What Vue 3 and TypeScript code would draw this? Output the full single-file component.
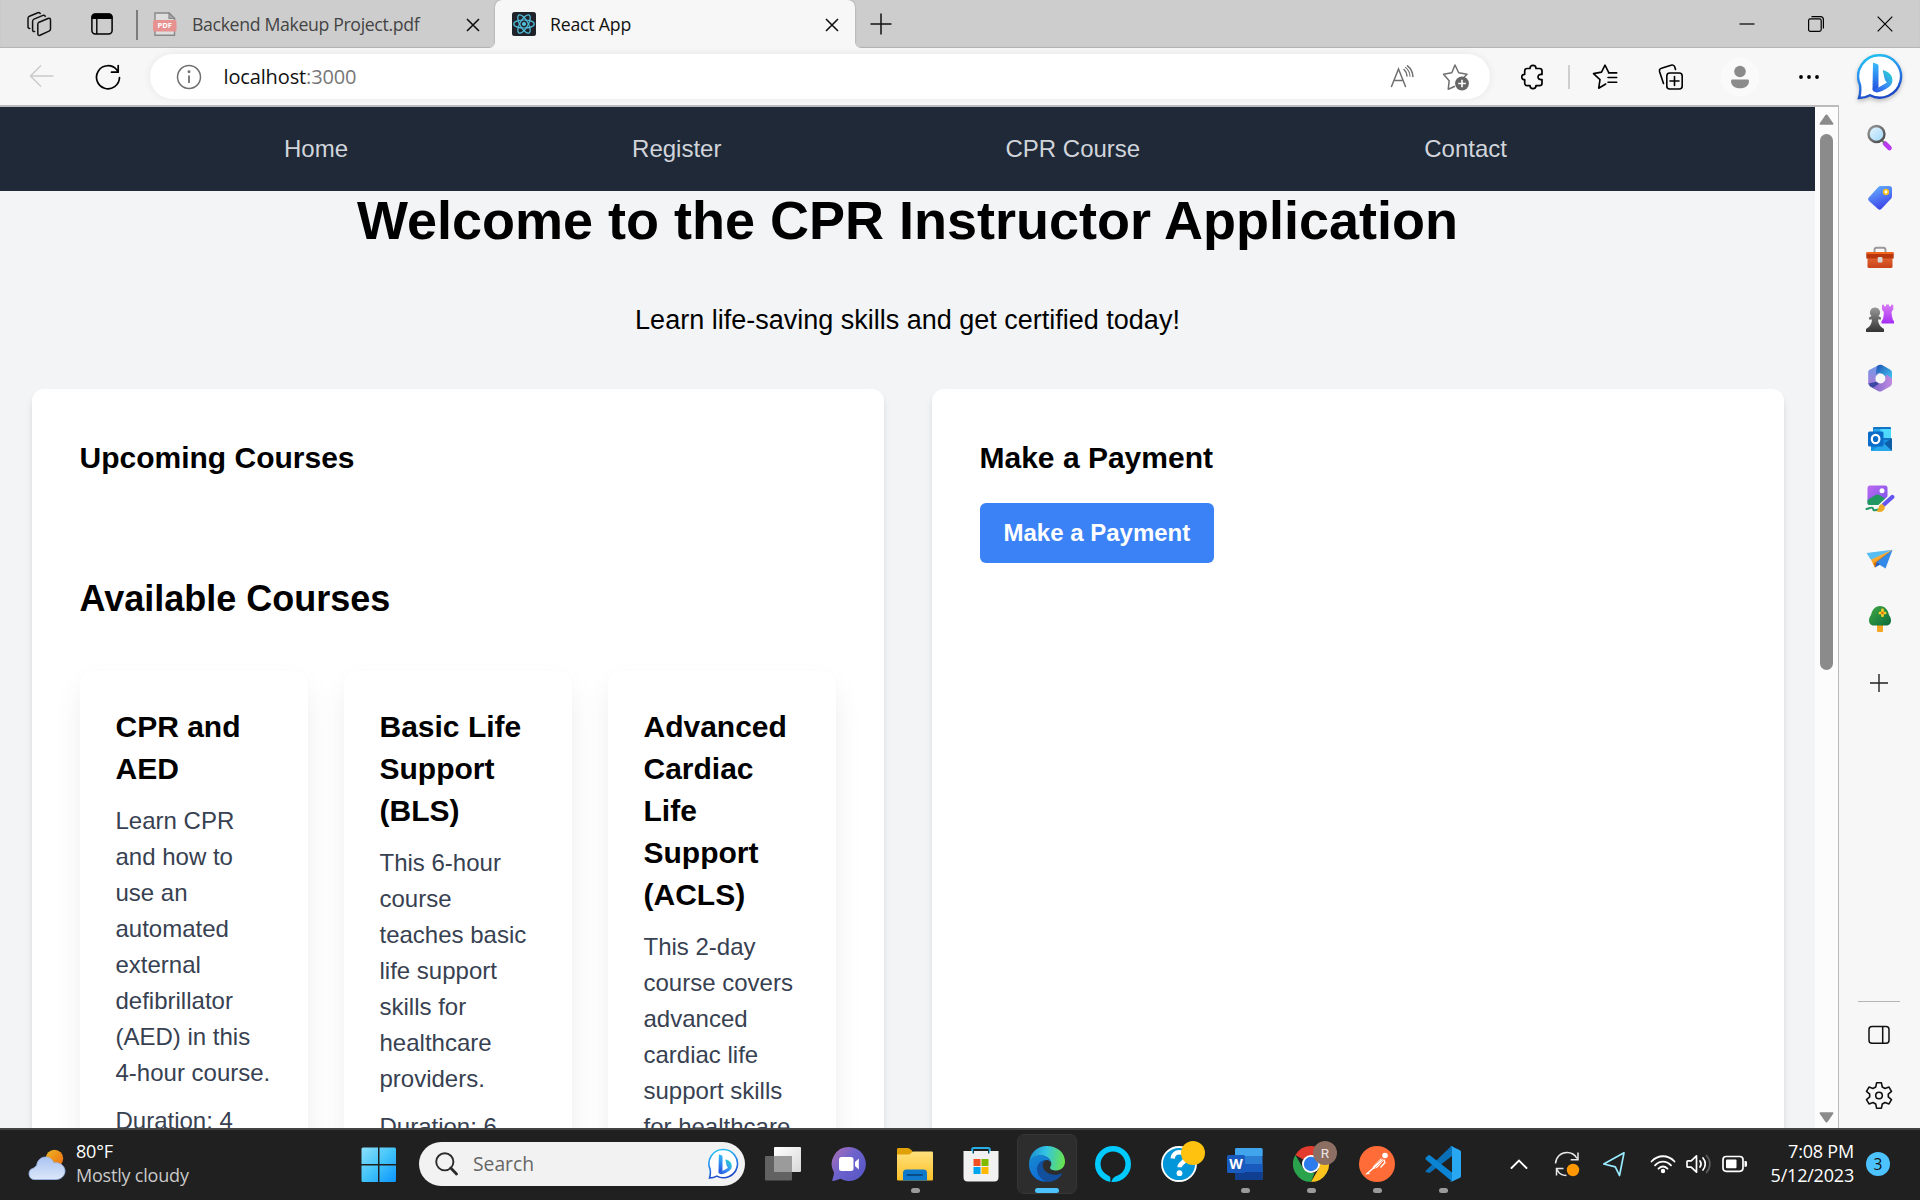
<script setup lang="ts">
interface Course {
  title: string
  description: string
  hours?: number
}

const links: string[] = ['Home', 'Register', 'CPR Course', 'Contact']

const courses: Course[] = [
  {
    title: 'CPR and AED',
    description: 'Learn CPR and how to use an automated external defibrillator (AED) in this 4-hour course.',
    hours: 4,
  },
  {
    title: 'Basic Life Support (BLS)',
    description: 'This 6-hour course teaches basic life support skills for healthcare providers.',
    hours: 6,
  },
  {
    title: 'Advanced Cardiac Life Support (ACLS)',
    description: 'This 2-day course covers advanced cardiac life support skills for healthcare',
  },
]
</script>

<template>
  <div class="screen">
    <svg class="defs" width="0" height="0">
      <defs>
        <linearGradient id="bingRing" x1="0" y1="0" x2="0.3" y2="1">
          <stop offset="0" stop-color="#1fc8f0" /><stop offset="0.5" stop-color="#2a8ff0" /><stop offset="1" stop-color="#1b48c8" />
        </linearGradient>
        <linearGradient id="bingStem" x1="0" y1="0" x2="0" y2="1">
          <stop offset="0" stop-color="#37bdff" /><stop offset="1" stop-color="#2450e0" />
        </linearGradient>
        <linearGradient id="bingBowl" x1="0" y1="1" x2="1" y2="0">
          <stop offset="0" stop-color="#2450e0" /><stop offset="0.5" stop-color="#3a90f5" /><stop offset="1" stop-color="#23dcc8" />
        </linearGradient>
        <symbol id="bing" viewBox="0 0 46 48">
          <path d="M23 2.200a21.200 21.200 0 1 1-10 40c-3.500 1.900-7 2.800-11 2.800 1.700-4.500 1.600-8 1-13A21.200 21.200 0 0 1 23 2.200z" fill="#fff" stroke="url(#bingRing)" stroke-width="2.400" />
          <path d="M16 9.500l4 1.500c1.200.5 1.500 1 1.500 2.300v21.500L18 37.500c-1.500.8-2.500-.2-2.500-1.700z" fill="url(#bingStem)" />
          <path d="M26 18.500c-.4-1 .3-1.500 1.200-1.100 5 1.900 8.200 4.600 8.200 9.600 0 5.500-3.400 7.500-11 11.300-4.500 2.200-8.900 1-8.900-2.500 2 .8 3.900.1 6-1.300l8.500-5c-1.500-1-2-2.200-2.600-4.400z" fill="url(#bingBowl)" />
        </symbol>
      </defs>
    </svg>

    <header class="tabstrip">
      <svg class="ic workspaces" width="26" height="26" viewBox="0 0 26 26" fill="none" stroke="#111" stroke-width="1.500" stroke-linejoin="round" stroke-linecap="round">
        <path d="M12.500 11.500l9.500-4c1.500-.6 2.500 0 2.500 1.500v9c0 1-.6 1.700-1.500 2.100l-9 4.100c-1.300.5-2.200-.1-2.200-1.400v-9.300c0-1 .1-1.600.7-2z" />
        <path d="M8.600 20.500c-1.200.3-2-.3-2-1.500v-8.500c0-1.300.4-2 1.400-2.400l9-3.700c1.200-.4 1.900 0 2.200 1" />
        <path d="M3.800 17.500c-1.200 0-1.800-.6-1.800-1.700V7.500c0-1.200.4-1.900 1.400-2.300l8.500-3.500c1.200-.4 2-.1 2.300.8" />
      </svg>
      <svg class="ic tabmenu" width="22" height="22" viewBox="0 0 22 22">
        <rect x="0.900" y="0.900" width="20.200" height="20.200" rx="3.500" fill="none" stroke="#000" stroke-width="1.500" />
        <path d="M.5 6V4A3.500 3.500 0 0 1 4 .5h14A3.500 3.500 0 0 1 21.500 4v2z" fill="#000" />
        <path d="M5.800 6v15" stroke="#000" stroke-width="1.400" />
      </svg>
      <i class="tab-divider"></i>
      <div class="tab tab-pdf">
        <svg width="24" height="24" viewBox="0 0 24 24">
          <path d="M2 1h14l5.500 5.500V23.300H2z" fill="#dedede" stroke="#888" stroke-width="1.400" />
          <path d="M16 1v5.500h5.500z" fill="#aaa" stroke="#888" stroke-width="1.200" />
          <rect x="0" y="8" width="23.500" height="11.500" rx="1.500" fill="#e79291" />
          <text x="11.800" y="16.400" text-anchor="middle" font-size="7.500" font-weight="700" fill="#fff" font-family="Open Sans, sans-serif">PDF</text>
        </svg>
        <span class="tab-title">Backend Makeup Project.pdf</span>
        <svg class="x" width="14" height="14" viewBox="0 0 14 14"><path d="M1 1l12 12M13 1L1 13" stroke="#111" stroke-width="1.600" /></svg>
      </div>
      <div class="tab tab-active">
        <svg width="24" height="24" viewBox="0 0 24 24">
          <rect width="24" height="24" rx="2.500" fill="#20232a" />
          <g fill="none" stroke="#53c1de" stroke-width="1.200">
            <ellipse cx="12" cy="12" rx="10.300" ry="4" />
            <ellipse cx="12" cy="12" rx="10.300" ry="4" transform="rotate(60 12 12)" />
            <ellipse cx="12" cy="12" rx="10.300" ry="4" transform="rotate(120 12 12)" />
          </g>
          <circle cx="12" cy="12" r="2.100" fill="#53c1de" />
        </svg>
        <span class="tab-title dark">React App</span>
        <svg class="x" width="14" height="14" viewBox="0 0 14 14"><path d="M1 1l12 12M13 1L1 13" stroke="#111" stroke-width="1.600" /></svg>
      </div>
      <svg class="newtab" width="22" height="22" viewBox="0 0 22 22"><path d="M11 .5v21M.5 11h21" stroke="#111" stroke-width="1.500" /></svg>
      <div class="window-buttons">
        <svg width="16" height="16" viewBox="0 0 16 16"><path d="M.5 8h15" stroke="#000" stroke-width="1.200" /></svg>
        <svg width="16" height="16" viewBox="0 0 16 16" fill="none" stroke="#000" stroke-width="1.200"><rect x="0.600" y="2.800" width="12.600" height="12.600" rx="1.800" /><path d="M3.500.6h8.900a3 3 0 0 1 3 3v8.900" /></svg>
        <svg width="16" height="16" viewBox="0 0 16 16"><path d="M.7.7l14.600 14.600M15.300.7L.7 15.300" stroke="#000" stroke-width="1.200" /></svg>
      </div>
    </header>

    <div class="toolbar">
      <svg class="back" width="25" height="24" viewBox="0 0 25 24" fill="none" stroke="#cacaca" stroke-width="1.500"><path d="M24.500 12H1.500M12 1.500L1.500 12 12 22.500" /></svg>
      <svg class="reload" width="26" height="26" viewBox="0 0 26 26" fill="none" stroke="#000" stroke-width="1.700" stroke-linecap="round" stroke-linejoin="round"><path d="M24.500 13.500A11.500 11.500 0 1 1 21.700 5.700L23 7.500M23.200 1.500v6.700h-6.700" /></svg>
      <div class="address">
        <svg width="26" height="26" viewBox="0 0 26 26" fill="none" stroke="#707070" stroke-width="1.500"><circle cx="13" cy="13" r="11.500" /><path d="M13 11.500v7.500" stroke-width="1.800" /><circle cx="13" cy="7.800" r="0.700" fill="#707070" /></svg>
        <span class="url">localhost<em>:3000</em></span>
        <svg class="read" width="26" height="26" viewBox="0 0 26 26" fill="none" stroke="#6f6f6f" stroke-width="1.500" stroke-linecap="round"><path d="M2.500 22.500L9.500 5 16.500 22.500M5 16.500h9M15 5.500c1.900 1.700 2.900 3.800 3 6.500M18.500 1.800c3.400 2.700 5.200 6.200 5.400 10.700" /><path d="M16.500 3.400c2.900 2.300 4.300 5.100 4.500 8.800" stroke-width="1.100" /></svg>
        <svg class="fav" width="28" height="28" viewBox="0 0 28 28"><path d="M13 23.300l-6.800 3 1-8.600L1.500 11.300l8.300-1.500L13 2l3.700 7.800 8.300 1.500-3 3" fill="none" stroke="#6f6f6f" stroke-width="1.500" stroke-linejoin="round" /><circle cx="20" cy="20.500" r="6.900" fill="#666" /><path d="M20 16.700v7.600M16.200 20.500h7.600" stroke="#fff" stroke-width="1.600" /></svg>
      </div>
      <svg class="puzzle" width="24" height="26" viewBox="0 0 24 26" fill="none" stroke="#000" stroke-width="1.700" stroke-linejoin="round"><path d="M6 4.500h3c0-2 1.200-3.200 3-3.200s3 1.200 3 3.200h3.500c1.500 0 2.500.9 2.500 2.400v3.600c-2.800-.3-4 .8-4 2.500s1.200 2.900 4 2.500v3.700c0 1.500-1 2.400-2.500 2.400H15c0 2-1.200 3.100-3 3.100s-3-1.100-3-3.100H6c-1.500 0-2.300-.9-2.300-2.400v-3.500c-1.800 0-3-1-3-2.700s1.200-2.700 3-2.700V6.900c0-1.500.8-2.400 2.300-2.400z" /></svg>
      <i class="tool-divider"></i>
      <svg class="favorites" width="26" height="26" viewBox="0 0 26 26" fill="none" stroke="#000" stroke-width="1.600" stroke-linejoin="round" stroke-linecap="round"><path d="M13.700 20l-7 4.200 1.300-8.500-6.500-6.100 8-1.500L13 1.200l3.500 6.900M16 13.500h8.700M16 18.300h8.700M16.500 8.900h8.200" /></svg>
      <svg class="collections" width="26" height="26" viewBox="0 0 26 26" fill="none" stroke="#000" stroke-width="1.600" stroke-linecap="round"><rect x="8.800" y="9" width="15.400" height="16" rx="3" /><path d="M16.500 12.500v9M12 17h9M5.500 19.500L1.700 8C1.100 6 1.700 4.700 3.500 4.200l9.500-3c1.900-.6 3.200.1 3.800 1.800l.7 2.500" /></svg>
      <div class="profile"><svg width="20" height="24" viewBox="0 0 20 24" fill="#8b8b8b"><circle cx="10" cy="6.500" r="5.800" /><path d="M2.500 14.500h15c1 0 1.500.6 1.500 1.500 0 4.500-3.500 7.300-9 7.300S1 20.500 1 16c0-.9.500-1.500 1.500-1.500z" /></svg></div>
      <svg class="dots" width="22" height="6" viewBox="0 0 22 6"><circle cx="3" cy="3" r="1.900" /><circle cx="11" cy="3" r="1.900" /><circle cx="19" cy="3" r="1.900" /></svg>
      <svg class="bing-big" width="46" height="48"><use href="#bing" /></svg>
    </div>

    <div class="body">
      <div class="viewport">
        <nav class="site-nav">
          <a v-for="link in links" :key="link">{{ link }}</a>
        </nav>
        <h1>Welcome to the CPR Instructor Application</h1>
        <p class="lead">Learn life-saving skills and get certified today!</p>
        <main class="panels">
          <section class="panel">
            <h2>Upcoming Courses</h2>
            <h3 class="available">Available Courses</h3>
            <div class="courses">
              <article v-for="course in courses" :key="course.title" class="course">
                <h4>{{ course.title }}</h4>
                <p>{{ course.description }}</p>
                <p v-if="course.hours">Duration: {{ course.hours }}</p>
              </article>
            </div>
          </section>
          <section class="panel">
            <h2>Make a Payment</h2>
            <button class="pay">Make a Payment</button>
          </section>
        </main>
      </div>
      <div class="scrollbar">
        <svg width="15" height="11" viewBox="0 0 15 11"><path d="M7.500.5c.6 0 1 .3 1.400.9l5.300 7.800c.5.900.1 1.500-.8 1.500H1.600c-.9 0-1.300-.6-.8-1.500l5.300-7.800c.4-.6.8-.9 1.400-.9z" fill="#8b8b8b" /></svg>
        <i class="thumb"></i>
        <svg class="down" width="15" height="11" viewBox="0 0 15 11"><path d="M7.500 10.500c.6 0 1-.3 1.400-.9l5.300-7.800c.5-.9.100-1.500-.8-1.500H1.600C.7.300.3.900.8 1.800l5.300 7.800c.4.600.8.900 1.400.9z" fill="#8b8b8b" /></svg>
      </div>
      <aside class="sidebar">
        <div class="side-item">
          <svg width="28" height="28" viewBox="0 0 28 28">
            <defs><linearGradient id="lens" x1="0" y1="0" x2="1" y2="1"><stop offset="0" stop-color="#e8f7ff" /><stop offset="1" stop-color="#9ed6fa" /></linearGradient><linearGradient id="rim" x1="0" y1="0" x2="1" y2="1"><stop offset="0" stop-color="#999" /><stop offset="1" stop-color="#444" /></linearGradient></defs>
            <path d="M19 19.500l4.500 4.500" stroke="#b839f0" stroke-width="4.600" stroke-linecap="round" /><path d="M16 16.500l2.500 2.500" stroke="#777" stroke-width="2" />
            <circle cx="10.500" cy="10" r="8" fill="url(#lens)" stroke="url(#rim)" stroke-width="2.400" />
          </svg>
        </div>
        <div class="side-item">
          <svg width="28" height="28" viewBox="0 0 28 28">
            <defs><linearGradient id="tag" x1="0.200" y1="0" x2="0.600" y2="1"><stop offset="0" stop-color="#65b1ff" /><stop offset="1" stop-color="#3b3fe8" /></linearGradient></defs>
            <path d="M15 2h8.500c1.500 0 2.500 1 2.500 2.500V12c0 1.200-.3 2-1 2.800L15.300 25c-1 1-2.300 1-3.300 0L3 17c-1-1-1.200-2.300-.2-3.400l9.500-10.500C13 2.300 13.800 2 15 2z" fill="url(#tag)" />
            <circle cx="20" cy="8" r="2.300" fill="#fff" stroke="#f8c21c" stroke-width="1.700" />
          </svg>
        </div>
        <div class="side-item">
          <svg width="28" height="28" viewBox="0 0 28 28">
            <defs><linearGradient id="box" x1="0" y1="0" x2="0" y2="1"><stop offset="0" stop-color="#ee7038" /><stop offset="1" stop-color="#c8441c" /></linearGradient></defs>
            <path d="M8.500 9.500V6c0-1.500.8-2.300 2.300-2.300h6.400c1.500 0 2.300.8 2.300 2.300v3.500" fill="none" stroke="#999" stroke-width="1.900" />
            <rect x="1.500" y="9" width="25" height="15" rx="1.500" fill="url(#box)" /><path d="M.3 9.500c0-.8.500-1.300 1.300-1.300h24.800c.8 0 1.300.5 1.300 1.300v5H.3z" fill="#b8360e" /><rect x="0.500" y="8" width="27" height="2" rx="1" fill="#f0661a" />
            <rect x="11.700" y="13" width="4.800" height="5.500" rx="1" fill="#d6d6d6" />
          </svg>
        </div>
        <div class="side-item">
          <svg width="28" height="28" viewBox="0 0 28 28">
            <defs><linearGradient id="rook" x1="0" y1="0" x2="0" y2="1"><stop offset="0" stop-color="#d87cf5" /><stop offset="1" stop-color="#a52cf5" /></linearGradient><linearGradient id="pawn" x1="0" y1="0" x2="0" y2="1"><stop offset="0" stop-color="#999" /><stop offset="1" stop-color="#333" /></linearGradient></defs>
            <path d="M16 .8h2v1.500h2V.5h3v1.800h2V.8h2.300v4.500L25.500 8c.2 3 .8 6 1.500 8l1 1v2.500H15.500V17l1-1c1-2.500 1.300-5 1.300-8L16 5.500z" fill="url(#rook)" />
            <path d="M9 3.500a5 5 0 0 1 3.500 8.600l2.500 1.500v2h-3c.3 3.500 1.300 5.500 3.200 7.400l2.800 2v2.500c0 .4-.3.700-.7.700H.8c-.5 0-.8-.3-.8-.7V25l2.800-2c2-2 3-4 3.200-7.400H3v-2l2.500-1.500A5 5 0 0 1 9 3.500z" fill="url(#pawn)" />
          </svg>
        </div>
        <div class="side-item">
          <svg width="26" height="28" viewBox="0 0 26 28">
            <defs>
              <linearGradient id="loopA" x1="0" y1="0" x2="0" y2="1"><stop offset="0" stop-color="#6d9be8" /><stop offset="1" stop-color="#b07ad8" /></linearGradient>
              <linearGradient id="loopB" x1="0" y1="0" x2="1" y2="1"><stop offset="0" stop-color="#1b4fb0" /><stop offset="1" stop-color="#4ad0fa" /></linearGradient>
              <linearGradient id="loopC" x1="0" y1="0" x2="1" y2="0"><stop offset="0" stop-color="#6f62c8" /><stop offset="1" stop-color="#c18ae0" /></linearGradient>
            </defs>
            <path d="M9.500 2.200L13 1v8.500l-4.200 3v7.500L4.500 22.500 1.200 20V8.500c0-1.500.5-2.200 1.800-3z" fill="url(#loopA)" />
            <path d="M10 2l2-1c1-.5 2-.5 3 0l8 4.500c1.300.8 2 1.700 2 3.500v8l-8-4.500-5-4-3.200 2z" fill="url(#loopB)" />
            <path d="M25 14.500V19c0 1.800-.7 2.700-2 3.500l-8 4.500c-1.400.8-2.600.8-4 0l-8-4.500L1.500 20l8.500-1.500h5.500l4-8z" fill="url(#loopC)" />
            <path d="M1.500 19.500l8.500-2 1.500 2.500-5.500 3.700L3 22z" fill="#3b49a4" />
            <circle cx="13.500" cy="14.500" r="4.900" fill="#f7f7f7" />
          </svg>
        </div>
        <div class="side-item">
          <svg width="26" height="26" viewBox="0 0 26 26">
            <rect x="6" y="1" width="18" height="17" rx="1" fill="#1474c4" /><rect x="12" y="3" width="12" height="9" fill="#50d9ff" /><rect x="6.500" y="3" width="7" height="9" fill="#28a8ea" />
            <path d="M4 14h21v10.500c0 .3-.3.500-.6.500H4.600c-.4 0-.6-.2-.6-.6z" fill="#1490df" /><path d="M25 12l-8.500 6 8.500 7z" fill="#0f5fa8" /><path d="M4 25l12.500-8L25 25z" fill="#28a8ea" />
            <rect x="1" y="5.500" width="15.500" height="15" rx="1.500" fill="#0a6cc8" /><ellipse cx="8.600" cy="13" rx="3.800" ry="4.200" fill="none" stroke="#fff" stroke-width="2.200" />
          </svg>
        </div>
        <div class="side-item">
          <svg width="30" height="28" viewBox="0 0 30 28">
            <defs><linearGradient id="art" x1="0" y1="0" x2="1" y2="1"><stop offset="0" stop-color="#bd69ef" /><stop offset="1" stop-color="#7651ef" /></linearGradient></defs>
            <rect x="2.500" y="0.500" width="20" height="19.500" rx="2.500" fill="url(#art)" /><circle cx="17" cy="5.800" r="2.500" fill="#fff" />
            <path d="M2.500 15l8-5c1.200-.8 2.500-.8 3.700 0l8.300 5v2.500c0 1.300-.8 2.500-2 2.500h-16c-1.300 0-2-.7-2-2z" fill="#219762" />
            <path d="M1.500 24c2.500-.5 4.500-2 6-1.200s0 2.300 1.500 2.500 2.500-.8 4.500-.8" fill="none" stroke="#219762" stroke-width="2" stroke-linecap="round" />
            <path d="M15 23L28.500 10.500" stroke="#f7f7f7" stroke-width="6.500" /><path d="M19 19.500l8.300-7.500" stroke="#6355f1" stroke-width="4.200" stroke-linecap="round" /><path d="M15.500 19.500c2-1.200 4.700 1.200 4.200 3.700-.6 3.300-5 4.800-8.500 2.800 3-1 1.500-5 4.300-6.500z" fill="#edaa24" />
          </svg>
        </div>
        <div class="side-item">
          <svg width="28" height="24" viewBox="0 0 28 24">
            <path d="M.5 6L26.500 2.800 5 13z" fill="#58bdf2" /><path d="M5 12.800L26.500 2.800 9 17v4z" fill="#f8a62c" /><path d="M26.500 2.800L9 20.500l-1.500-4z" fill="#cf6c10" /><path d="M26.500 2.800L19.500 21.500 10 15.500z" fill="#3389e8" /><path d="M9 20.500l5.200-3-3.200-2.200z" fill="#1d5fc4" />
          </svg>
        </div>
        <div class="side-item">
          <svg width="26" height="28" viewBox="0 0 26 28">
            <defs><linearGradient id="leaf" x1="0" y1="0" x2="1" y2="1"><stop offset="0" stop-color="#40a944" /><stop offset="1" stop-color="#0c6b3c" /></linearGradient></defs>
            <rect x="10" y="19" width="6" height="8" rx="1" fill="#f5a623" /><path d="M13 1c5 0 8 4 9 9 1.200 1.500 2 3.500 2 5.500 0 3-2 5-5 5H7c-3 0-5-2-5-5 0-2 .8-4 2-5.500C5 5 8 1 13 1z" fill="url(#leaf)" />
            <path d="M14.200 4.500c0-1.300 2.600-1.300 2.600 0V6.700h1.700c1.300 0 1.300 2.600 0 2.600h-1.700v1.700c0 1.300-2.600 1.300-2.600 0V9.300h-1.700c-1.300 0-1.300-2.600 0-2.600h1.700z" fill="#f8d02c" /><circle cx="15.500" cy="8" r="1.300" fill="#e06a10" />
          </svg>
        </div>
        <div class="side-item plus"><svg width="20" height="20" viewBox="0 0 20 20"><path d="M10 1v18M1 10h18" stroke="#222" stroke-width="1.400" /></svg></div>
        <div class="side-bottom">
          <i class="side-line"></i>
          <svg width="22" height="20" viewBox="0 0 22 20" fill="none" stroke="#111" stroke-width="1.500"><rect x="1" y="1.500" width="20" height="16.800" rx="3" /><path d="M14.700 1.500v17" /></svg>
          <svg class="gear" width="28" height="28" viewBox="0 0 28 28" fill="none" stroke="#111" stroke-width="1.600" stroke-linejoin="round"><path d="M11.600 1.800h4.800l.9 4.200 2.700 1.500 4-1.400 2.500 4.200-3.200 2.800v2.800l3.200 2.800-2.500 4.200-4-1.400-2.700 1.500-.9 4.200h-4.800l-.9-4.200L8 21.500l-4 1.400-2.500-4.200 3.200-2.800v-2.800l-3.200-2.800L4 6.100l4 1.400L10.700 6z" /><circle cx="14" cy="14.500" r="3.300" /></svg>
        </div>
      </aside>
    </div>

    <footer class="taskbar">
      <svg class="weather" width="38" height="34" viewBox="0 0 38 34">
        <defs><linearGradient id="sun" x1="0" y1="0" x2="1" y2="1"><stop offset="0" stop-color="#ecb525" /><stop offset="1" stop-color="#f06c10" /></linearGradient><linearGradient id="cloud" x1="0" y1="0" x2="0" y2="1"><stop offset="0" stop-color="#a9c3f0" /><stop offset="1" stop-color="#dce7fa" /></linearGradient></defs>
        <circle cx="26.500" cy="10.500" r="8.700" fill="url(#sun)" />
        <path d="M6.500 31.500a5.700 5.700 0 0 1-.8-11.300 6 6 0 0 1 3-2.400C9 12.500 12.800 9 17.500 9c4 0 7 2.300 8.300 6 .7-.2 1.400-.3 2.200-.3 5 0 9 3.800 9 8.400s-4 8.400-9 8.400z" fill="url(#cloud)" stroke="#9dbbee" stroke-width="0.800" />
      </svg>
      <div class="weather-text"><span>80°F</span><span class="dim">Mostly cloudy</span></div>
      <svg class="start" width="36" height="36" viewBox="0 0 36 36">
        <defs><linearGradient id="win" x1="0" y1="0" x2="1" y2="1"><stop offset="0" stop-color="#8ce0fb" /><stop offset="0.500" stop-color="#42c4f9" /><stop offset="1" stop-color="#0b94fc" /></linearGradient></defs>
        <path d="M2 .5h15v16.500H.5V2A1.500 1.500 0 0 1 2 .5zM18.500.5h15A1.500 1.500 0 0 1 35 2v15H18.500zM.5 18.500H17V35H2a1.500 1.500 0 0 1-1.500-1.500zM18.500 18.500H35v15a1.500 1.500 0 0 1-1.500 1.500h-15z" fill="url(#win)" />
      </svg>
      <div class="search">
        <svg width="23" height="24" viewBox="0 0 23 24" fill="none" stroke="#2b2b2b"><circle cx="9.800" cy="9.800" r="8.600" stroke-width="1.900" /><path d="M15.800 16l5.700 6" stroke-width="2.800" stroke-linecap="round" /></svg>
        <span>Search</span>
        <svg class="bing-small" width="31" height="32"><use href="#bing" /></svg>
      </div>
      <div class="apps">
        <div class="app"><svg width="36" height="36" viewBox="0 0 36 36"><defs><linearGradient id="tv" x1="0" y1="0" x2="1" y2="1"><stop offset="0" stop-color="#fff" /><stop offset="1" stop-color="#d8d8d8" /></linearGradient></defs><rect x="9" y="1" width="27" height="25" rx="1" fill="url(#tv)" /><rect x="0" y="10" width="27" height="24.500" rx="1" fill="#6b6b6b" fill-opacity=".88" /><path d="M9 10h18v16H9z" fill="#9b9b9b" /></svg></div>
        <div class="app"><svg width="36" height="36" viewBox="0 0 36 36"><defs><linearGradient id="chat" x1="0" y1="0" x2="1" y2="0.800"><stop offset="0" stop-color="#b06fb4" /><stop offset="0.500" stop-color="#6c62cc" /><stop offset="1" stop-color="#5757c5" /></linearGradient></defs><path d="M18 1a17 17 0 1 1-8.500 31.800C6.500 34 4 34.800 1 35c1-3 1.500-5 2-8.500A17 17 0 0 1 18 1z" fill="url(#chat)" /><rect x="8" y="11" width="14.500" height="14" rx="2.500" fill="#fff" /><path d="M24 16l3.800-3.500v11L24 20z" fill="#fff" /></svg></div>
        <div class="app"><svg width="36" height="36" viewBox="0 0 36 36"><defs><linearGradient id="fold" x1="0" y1="0" x2="0" y2="1"><stop offset="0" stop-color="#ffe07c" /><stop offset="1" stop-color="#fcc128" /></linearGradient></defs><path d="M0 3.500C0 2.500.5 2 1.500 2h9.300c.8 0 1.300.2 1.900.8L15.500 5v8H0z" fill="#e0a008" /><path d="M0 8.500h11.500c.8 0 1.300-.2 1.900-.8l1.600-1.500c.5-.5 1-.7 1.600-.7h18c1 0 1.400.5 1.400 1.500v26c0 1-.5 1.500-1.500 1.500H1.500C.5 34.500 0 34 0 33z" fill="url(#fold)" /><path d="M6 34.500V27c0-2.500 1.300-3.500 3.500-3.500h17c2.200 0 3.500 1 3.500 3.500v7.500z" fill="#0f79cb" /><path d="M10.500 29h14.500" stroke="#064d89" stroke-width="1.800" stroke-linecap="round" /></svg><i class="dot"></i></div>
        <div class="app"><svg width="36" height="36" viewBox="0 0 36 36"><path d="M9.200 8V3.500c0-1 .6-1.600 1.600-1.600h14.400c1 0 1.600.6 1.600 1.600V8" fill="none" stroke="#29aee8" stroke-width="2" /><path d="M.5 5h8.700v2.500H11V5h14v2.500h1.800V5h8.700v26.500c0 2.500-1.500 4-4 4h-27c-2.500 0-4-1.500-4-4z" fill="#f1f1f1" /><path d="M10.500 13h7v7h-7z" fill="#f25022" /><path d="M18.500 13h7v7h-7z" fill="#7fba00" /><path d="M10.500 21h7v7h-7z" fill="#00a4ef" /><path d="M18.500 21h7v7h-7z" fill="#ffb900" /></svg></div>
        <div class="app"><div class="active-app">
          <svg width="36" height="36" viewBox="0 0 36 36">
            <defs><linearGradient id="edgeTop" x1="0" y1="0.400" x2="1" y2="0.500"><stop offset="0" stop-color="#1b8ed0" /><stop offset="0.450" stop-color="#33c4e4" /><stop offset="1" stop-color="#69e34b" /></linearGradient><linearGradient id="edgeMid" x1="0" y1="0" x2="0.500" y2="1"><stop offset="0" stop-color="#178bcf" /><stop offset="1" stop-color="#0f6bd8" /></linearGradient></defs>
            <path d="M0 17C.8 7 8 0 18 0c10.500 0 18 7 18 15.500 0 5.500-4 9-8.500 9-4 0-6.500-1.300-6.500-2.800 0-.9 1.300-1.700 1.300-3.800C22.300 14 18 9.500 12 9.500 6.500 9.500 1.500 12.500 0 17z" fill="url(#edgeTop)" />
            <path d="M0 18.500c0-5.500 5-9.500 11-9.500 6.500 0 11.300 4.300 11.300 8.500-.6-2-2.300-3.500-4.300-3.500-5 0-9 4.500-9 9.500 0 5.500 4 10.500 9.500 12.300C8 36.500 0 28.500 0 18.500z" fill="url(#edgeMid)" />
            <path d="M17 14c-3.200 1.500-4 5-2.500 8.500 2 4.500 8 6.700 13 6.200 2.300-.2 4-1 5-1.500.5-.2.900.2.600.7C30 32.500 25 35.700 19.500 35.900 12.500 34.500 8 29 8 23.500 8 18 12 14 17 14z" fill="#12509e" />
          </svg></div><i class="dot wide"></i></div>
        <div class="app"><svg width="36" height="36" viewBox="0 0 36 36"><circle cx="18" cy="18" r="15.200" fill="none" stroke="#00caff" stroke-width="5.600" /><path d="M12.500 29.200c2 .7 2.900 1.500 2.900 3.200V36h.9c.5-2.800 2.200-4.700 5.200-6.600z" fill="#202020" /></svg></div>
        <div class="app"><svg class="help" width="45" height="42" viewBox="0 0 45 42"><circle cx="18" cy="24" r="17" fill="#0396d8" stroke="#fff" stroke-width="1.800" /><path d="M11.700 18.500c.3-4 3-6.200 6.600-6.200s6.300 2 6.300 5.500c0 5-6 5-6 9.500" fill="none" stroke="#fff" stroke-width="4.400" /><circle cx="18.500" cy="33.200" r="2.900" fill="#fff" /><circle cx="32" cy="13" r="12" fill="#ffc20e" /></svg></div>
        <div class="app"><svg width="36" height="36" viewBox="0 0 36 36"><rect x="8" y="2" width="27.500" height="32" rx="1.500" fill="#2b7cd3" /><path d="M9.500 2H34a1.500 1.500 0 0 1 1.500 1.500V10H8V3.500A1.500 1.500 0 0 1 9.500 2z" fill="#41a5ee" /><path d="M8 18h27.500v8H8z" fill="#185abd" /><path d="M8 26h27.500v6.500A1.500 1.500 0 0 1 34 34H9.500A1.500 1.500 0 0 1 8 32.500z" fill="#103f91" /><rect x="0" y="9" width="18" height="18" rx="1.500" fill="#185abd" /><text x="9" y="22.800" text-anchor="middle" font-size="14" font-weight="700" fill="#fff" font-family="Open Sans, sans-serif">W</text></svg><i class="dot"></i></div>
        <div class="app"><svg class="help" width="45" height="42" viewBox="0 0 45 42">
          <path d="M18 24L2.400 15A18 18 0 0 1 33.600 15z" fill="#e33b2e" /><path d="M18 24V15h15.600A18 18 0 0 1 18 42l7.800-13.500z" fill="#fcc31e" /><path d="M2.400 15l7.800 13.500L18 33l3.500 0-3.500 9A18 18 0 0 1 2.400 15z" fill="#2ba24c" /><circle cx="18" cy="24" r="9" fill="#fff" /><circle cx="18" cy="24" r="7.200" fill="#2d7cee" />
          <circle cx="32" cy="13" r="12" fill="#8d6e63" /><text x="32" y="17.500" text-anchor="middle" font-size="13.500" fill="#ece6e3" font-family="Roboto, sans-serif">R</text></svg><i class="dot"></i></div>
        <div class="app"><svg width="36" height="36" viewBox="0 0 36 36"><circle cx="18" cy="18" r="18" fill="#ff6c37" /><circle cx="26" cy="9.500" r="2.800" fill="#fff" /><path d="M22 12.300l2.800 2-6.300 7.200-5.500 2 1.500-4z" fill="#fff" /><path d="M14 20l9-7M16 22l8-8" stroke="#ff6c37" stroke-width="0.600" /><path d="M15 21.500L8 27.700l2.500-.3M24.800 13.500l1.200 3-4.500 5" stroke="#fff" stroke-width="1.300" fill="none" /></svg><i class="dot"></i></div>
        <div class="app"><svg width="36" height="36" viewBox="0 0 36 36"><path d="M1 24.500L25.500.8c.8-.7 1.500-.9 2.500-.6v9L5.200 26.600c-.8.5-1.500.4-2.200-.1L1 26.200c-.7-.6-.6-1.200 0-1.700z" fill="#0a71b8" /><path d="M1 11.500L3 9.600c.7-.6 1.500-.6 2.200-.1L27 26.500V35.500L.8 13.500c-.6-.6-.5-1.400.2-2z" fill="#0a84d3" /><path d="M26.500.3L34.500 4c1 .5 1.500 1.200 1.500 2.300v23.500c0 1.100-.5 1.800-1.500 2.300l-8 3.700c-.8.3-1.600.1-2.200-.5 1.500 1 2.700.2 2.700-1.300V2c0-1.500-1.200-2.200-2.700-1.200.6-.6 1.300-.9 2.200-.5z" fill="#28a7f2" /></svg><i class="dot"></i></div>
      </div>
      <div class="tray">
        <svg class="t-chev" width="18" height="12" viewBox="0 0 18 12"><path d="M1.500 10L9 2.500l7.500 7.500" fill="none" stroke="#fff" stroke-width="1.900" stroke-linecap="round" /></svg>
        <svg class="t-sync" width="26" height="26" viewBox="0 0 26 26"><path d="M1.500 12.500C2 6 6.800 1.500 13 1.500c4.500 0 8 2.200 10 6M24 1.500v7.300h-7.300M9.500 17.500H2.500v7M3 18.500c1.700 3.700 5 6 9.500 6" fill="none" stroke="#e8e8e8" stroke-width="1.500" /><circle cx="19" cy="19" r="6.200" fill="#ff9800" /></svg>
        <svg class="t-nav" width="24" height="26" viewBox="0 0 24 26"><path d="M22 1.800L1.800 13l11.500 2.800L17.500 24.500z" fill="none" stroke="#99ebff" stroke-width="1.700" stroke-linejoin="round" /></svg>
        <svg class="t-wifi" width="26" height="20" viewBox="0 0 26 20" fill="none" stroke="#fff" stroke-width="1.800" stroke-linecap="round"><path d="M1.500 7.500c6.500-7 16.500-7 23 0M5 11.300c4.700-5 11.300-5 16 0M8.500 14.700c2.800-2.700 6.200-2.700 9 0" /><circle cx="13" cy="17" r="1.300" fill="#fff" /></svg>
        <svg class="t-vol" width="26" height="20" viewBox="0 0 26 20" fill="none" stroke="#fff" stroke-width="1.700" stroke-linecap="round" stroke-linejoin="round"><path d="M2 6.800h3.200l5.300-5v16.400l-5.300-5H2c-.6 0-1-.4-1-1V7.800c0-.6.400-1 1-1zM14 7c1.300 1.800 1.300 4.200 0 6M17 4c3 3.500 3 8.500 0 12" /><path d="M20.500 1.500c4.500 5 4.500 12 0 17" stroke="#5c5c5c" /></svg>
        <svg class="t-bat" width="26" height="18" viewBox="0 0 26 18"><rect x="1" y="1.500" width="20" height="14.800" rx="3.200" fill="none" stroke="#fff" stroke-width="1.700" /><rect x="4" y="4.500" width="10.500" height="8.800" rx="1" fill="#fff" /><path d="M22.500 6h.8c1.200 0 1.700.7 1.700 1.600v2.600c0 .9-.5 1.600-1.700 1.600h-.8z" fill="#fff" /></svg>
        <div class="clock"><span>7:08 PM</span><span>5/12/2023</span></div>
        <div class="badge">3</div>
      </div>
    </footer>
  </div>
</template>

<style>
body { margin: 0; overflow: hidden; }
</style>

<style scoped>
.screen { width: 1920px; height: 1200px; display: flex; flex-direction: column; overflow: hidden; background: #f7f7f7; font-family: "Open Sans", "Noto Sans", sans-serif; }
.defs { position: absolute; }
svg { flex: none; display: block; }
i { display: block; flex: none; }

.tabstrip { height: 48px; flex: none; display: flex; align-items: center; background: #cdcdcd; box-shadow: inset 0 -1px 1px #b3b3b3; }
.workspaces { margin-left: 26px; }
.tabmenu { margin-left: 39px; }
.tab-divider { width: 2px; height: 30px; margin: 2px 0 0 23px; background: #7c7c7c; }
.tab { display: flex; align-items: center; height: 48px; box-sizing: border-box; }
.tab-pdf { width: 357px; padding: 0 15px 0 15px; }
.tab-title { margin-left: 14px; margin-top: -1px; font-size: 17.700px; letter-spacing: -0.350px; color: #444; white-space: nowrap; line-height: 24px; }
.tab-title.dark { color: #111; letter-spacing: -0.200px; }
.tab .x { margin-left: auto; margin-top: 2px; }
.tab-pdf .tab-title { margin-left: 15px; }
.tab-active { width: 360px; padding: 0 16px 0 17px; background: #f7f7f7; border-radius: 7px 7px 0 0; position: relative; box-shadow: 0 0 2px rgba(0, 0, 0, .3); clip-path: inset(0 -6px 0 -6px); }
.tab-active::before, .tab-active::after { content: ""; position: absolute; bottom: 0; width: 5px; height: 5px; }
.tab-active::before { left: -5px; background: radial-gradient(circle at 0 0, #cdcdcd 4.500px, #f7f7f7 5px); }
.tab-active::after { right: -5px; background: radial-gradient(circle at 100% 0, #cdcdcd 4.500px, #f7f7f7 5px); }
.newtab { margin-left: 15px; margin-top: -1px; }
.window-buttons { margin-left: auto; margin-right: 27px; margin-top: -1px; display: flex; gap: 53px; }

.toolbar { height: 59px; box-sizing: border-box; flex: none; display: flex; align-items: center; background: linear-gradient(#bbb, #bbb) 0 57px / 1839px 2px no-repeat #f7f7f7; }
.toolbar > svg, .toolbar > i, .toolbar > div { margin-top: -2px; }
.toolbar > .back { margin-left: 29px; margin-top: -3px; }
.reload { margin-left: 41px; }
.address { width: 1340px; height: 45px; margin-left: 29px; border-radius: 23px; background: #fff; display: flex; align-items: center; box-sizing: border-box; padding: 0 20px 0 26px; box-shadow: 0 0 8px rgba(0, 0, 0, .07); }
.url { margin-left: 21.500px; margin-top: -1px; font-size: 20px; letter-spacing: -0.140px; color: #111; }
.url em { font-style: normal; color: #777; }
.read { margin-left: auto; }
.fav { margin-left: 27px; }
.puzzle { margin-left: 31px; }
.tool-divider { width: 2px; height: 24px; margin-left: 23px; background: #cfcfcf; }
.favorites { margin-left: 22px; }
.collections { margin-left: 40px; }
.profile { width: 36px; height: 36px; border-radius: 50%; background: #fafafa; margin-left: 38px; display: flex; align-items: center; justify-content: center; box-shadow: 0 0 0 1px #fcfcfc; }
.dots { margin-left: 40px; }
.bing-big { margin-left: 37px; filter: drop-shadow(0 2px 2px rgba(0, 0, 0, .25)); }

.body { height: 1021px; flex: none; display: flex; }
.viewport { width: 1815px; overflow: hidden; background: #f3f4f6; font-family: "Liberation Sans", Arial, sans-serif; font-size: 24px; line-height: 36px; color: #000; }
.site-nav { height: 84px; background: #1f2937; color: #d1d5db; display: flex; align-items: center; justify-content: space-evenly; padding-right: 24px; }
h1, h2, h3, h4, p { margin: 0; }
h1 { font-size: 54px; line-height: 60px; font-weight: 700; text-align: center; margin-top: -1px; margin-bottom: 49px; }
.lead { font-size: 27px; line-height: 42px; text-align: center; margin-bottom: 48px; }
.panels { display: flex; gap: 48px; padding: 0 31.500px; }
.panel { flex: 1; min-width: 0; height: 1200px; box-sizing: border-box; padding: 48px; background: #fff; border-radius: 12px; box-shadow: 0 6px 9px -1.500px rgba(0, 0, 0, .1), 0 3px 6px -3px rgba(0, 0, 0, .1); }
h2 { font-size: 30px; line-height: 42px; margin-bottom: 24px; }
.available { font-size: 36px; line-height: 48px; margin: 96px 0 48px; }
.courses { display: flex; gap: 36px; }
.course { width: 228px; height: 700px; box-sizing: border-box; padding: 36px; border-radius: 12px; background: #fff; box-shadow: 0 14px 32px -4px rgba(0, 0, 0, .09), 0 0 2px rgba(0, 0, 0, .02); }
.course h4 { font-size: 30px; line-height: 42px; margin-top: -1px; margin-bottom: 13px; }
.course p { color: #374151; margin-bottom: 12px; }
.pay { display: block; border: 0; border-radius: 6px; background: #3b82f6; color: #fff; font: 700 24px/36px "Liberation Sans", Arial, sans-serif; padding: 12px 24px; }

.scrollbar { width: 23px; flex: none; background: #fcfcfc; display: flex; flex-direction: column; align-items: center; padding-top: 7px; box-sizing: border-box; }
.thumb { width: 13px; height: 536px; border-radius: 7px; background: #8b8b8b; margin-top: 9px; }
.scrollbar .down { margin-top: auto; margin-bottom: 5px; }
.sidebar { flex: 1; border-left: 1px solid #b9b9b9; display: flex; flex-direction: column; align-items: center; background: #f7f7f7; padding-top: 1px; }
.side-item { height: 60.100px; flex: none; display: flex; align-items: center; justify-content: center; }
.side-item.plus { height: 68px; margin-right: 2px; }
.side-bottom { margin-top: auto; display: flex; flex-direction: column; align-items: center; padding-bottom: 19px; margin-right: 1px; }
.side-line { width: 42px; height: 1px; background: #b5b5b5; margin-bottom: 23px; }
.gear { margin-top: 36px; }

.taskbar { height: 72px; flex: none; box-sizing: border-box; border-top: 2px solid #444; background: #202020; display: flex; align-items: center; color: #fff; }
.weather { margin-left: 28px; }
.weather-text { margin-left: 10px; width: 200px; display: flex; flex-direction: column; font-size: 18px; line-height: 24px; letter-spacing: -0.200px; margin-top: -5px; }
.dim { color: #c9c9c9; }
.start { margin-left: 85px; margin-top: -1px; }
.search { width: 326px; height: 44px; margin-left: 22px; border-radius: 22px; background: #f2f2f2; display: flex; align-items: center; box-sizing: border-box; padding: 0 6px 0 16px; margin-top: -2px; }
.search span { margin-left: 15px; margin-top: -1px; font-size: 19.300px; color: #666; }
.bing-small { margin-left: auto; }
.apps { display: flex; margin-left: 5px; }
.app { width: 66px; height: 70px; display: flex; align-items: center; justify-content: center; position: relative; }
.app > svg { margin-top: -2px; }
.app > .help { margin: -8px 0 0 9px; }
.active-app { width: 60px; height: 60px; box-sizing: border-box; border-radius: 7px; background: #2d2d2d; border: 1px solid #363636; display: flex; align-items: center; justify-content: center; margin-top: -2px; }
.dot { position: absolute; bottom: 7px; left: 28.500px; width: 9px; height: 5px; border-radius: 3px; background: #9a9a9a; }
.dot.wide { left: 21px; width: 24px; background: #4cc2ff; }
.tray { flex: 1; display: flex; align-items: center; padding-left: 34px; }
.tray > * { flex: none; }
.t-sync { margin-left: 26px; }
.t-nav { margin-left: 22px; }
.t-wifi { margin-left: 24px; }
.t-vol { margin-left: 10px; }
.t-bat { margin-left: 10px; }
.tray > svg { margin-top: -2px; }
.clock { width: 106px; display: flex; flex-direction: column; text-align: right; font-size: 18px; line-height: 24px; letter-spacing: -0.200px; margin-top: -5px; }
.badge { margin-left: 12px; width: 24px; height: 24px; border-radius: 50%; background: #4cc2ff; color: #111; font-size: 15.500px; line-height: 24px; text-align: center; margin-top: -2px; }
</style>
